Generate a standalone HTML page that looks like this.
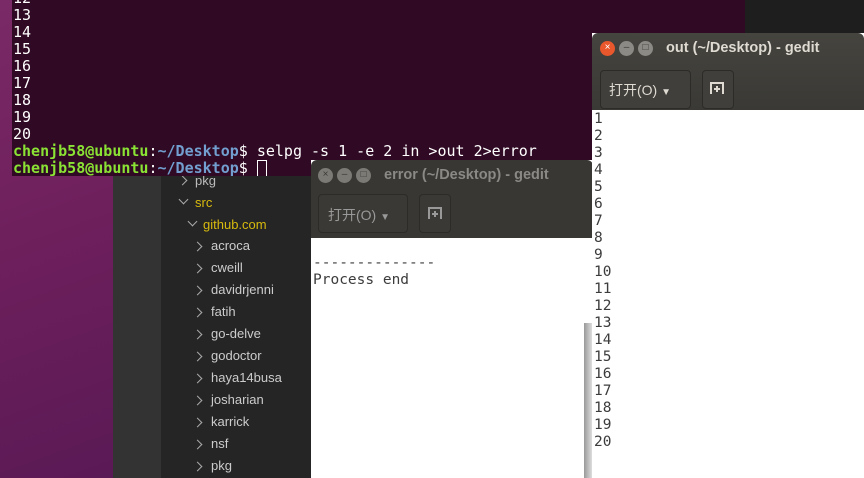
<!DOCTYPE html>
<html><head><meta charset="utf-8"><style>
*{margin:0;padding:0;box-sizing:border-box}
body{width:864px;height:478px;overflow:hidden;position:relative;background:#252526;font-family:"Liberation Sans","Noto Sans CJK SC",sans-serif}
.abs{position:absolute}
.term{left:12px;top:0;width:733px;height:176px;background:#300a24;font-family:"DejaVu Sans Mono","Liberation Mono",monospace;font-size:15px;color:#fff;line-height:17px;white-space:pre;overflow:hidden}
.g{color:#8ae234;font-weight:bold}.b{color:#729fcf;font-weight:bold}
.tree{font-size:13px;color:#ccc}
.tree div{position:absolute;height:22px;line-height:22px}
.chev{position:absolute;width:7px;height:7px;border-right:1px solid #aaa;border-bottom:1px solid #aaa}
.tb{color:#dfdbd2;font-weight:bold;font-size:14px}
.btn{position:absolute;border:1px solid #2c2b28;border-radius:4px;background:#403f3b}
.circ{position:absolute;width:15px;height:15px;border-radius:50%;background:#7b7a75;font-size:10px;color:#3c3b37;text-align:center;line-height:14px}
.mono{font-family:"DejaVu Sans Mono","Liberation Mono",monospace;font-size:14.5px;line-height:17px;color:#3c3c3c;white-space:pre}
</style></head><body>
<div class="abs" style="left:0;top:0;width:113px;height:478px;background:linear-gradient(160deg,#7a2a66,#6d1f5c 50%,#5a1a55)"></div>
<div class="abs" style="left:113px;top:176px;width:48px;height:302px;background:#333"></div>
<div class="abs" style="left:745px;top:0;width:119px;height:40px;background:#1e1e1e"></div>
<div class="abs tree" style="left:0;top:0;width:311px;height:478px">
<div style="left:195px;top:170px;color:#bbb">pkg</div><span class="chev" style="left:179px;top:177px;transform:rotate(-45deg)"></span>
<div style="left:195px;top:192px;color:#d7ba0d">src</div><span class="chev" style="left:180px;top:196px;transform:rotate(45deg)"></span>
<div style="left:203px;top:214px;color:#d7ba0d">github.com</div><span class="chev" style="left:189px;top:218px;transform:rotate(45deg)"></span>
<div style="left:211px;top:235px">acroca</div><span class="chev" style="left:194px;top:243px;transform:rotate(-45deg)"></span>
<div style="left:211px;top:257px">cweill</div><span class="chev" style="left:194px;top:265px;transform:rotate(-45deg)"></span>
<div style="left:211px;top:279px">davidrjenni</div><span class="chev" style="left:194px;top:287px;transform:rotate(-45deg)"></span>
<div style="left:211px;top:301px">fatih</div><span class="chev" style="left:194px;top:309px;transform:rotate(-45deg)"></span>
<div style="left:211px;top:323px">go-delve</div><span class="chev" style="left:194px;top:331px;transform:rotate(-45deg)"></span>
<div style="left:211px;top:345px">godoctor</div><span class="chev" style="left:194px;top:353px;transform:rotate(-45deg)"></span>
<div style="left:211px;top:367px">haya14busa</div><span class="chev" style="left:194px;top:375px;transform:rotate(-45deg)"></span>
<div style="left:211px;top:389px">josharian</div><span class="chev" style="left:194px;top:397px;transform:rotate(-45deg)"></span>
<div style="left:211px;top:411px">karrick</div><span class="chev" style="left:194px;top:419px;transform:rotate(-45deg)"></span>
<div style="left:211px;top:433px">nsf</div><span class="chev" style="left:194px;top:441px;transform:rotate(-45deg)"></span>
<div style="left:211px;top:455px">pkg</div><span class="chev" style="left:194px;top:463px;transform:rotate(-45deg)"></span>
</div>
<div class="abs term"><div style="margin-top:-10px;padding-left:1px">12
13
14
15
16
17
18
19
20
<span class="g">chenjb58@ubuntu</span>:<span class="b">~/Desktop</span>$ selpg -s 1 -e 2 in &gt;out 2&gt;error
<span class="g">chenjb58@ubuntu</span>:<span class="b">~/Desktop</span>$ <span style="display:inline-block;width:10px;height:18px;border:1px solid #fff;vertical-align:top"></span></div></div>

<!-- error window -->
<div class="abs" style="left:311px;top:160px;width:282px;height:318px;background:#fff">
<div class="abs" style="left:0;top:0;width:282px;height:78px;background:#383733;border-radius:6px 6px 0 0"></div>
<div class="circ" style="left:7px;top:8px">×</div><div class="circ" style="left:26px;top:8px">–</div><div class="circ" style="left:45px;top:8px">□</div>
<div class="abs" style="left:73px;top:7px;color:#8a8985;font-weight:bold;font-size:14.5px">error (~/Desktop) - gedit</div>
<div class="btn" style="left:7px;top:34px;width:90px;height:39px;background:#3a3935"></div>
<div class="abs" style="left:17px;top:45px;color:#999;font-size:14px">打开(O) <span style="font-size:10px">▼</span></div>
<div class="btn" style="left:108px;top:34px;width:32px;height:39px;background:#3a3935"></div>
<svg class="abs" style="left:116px;top:45px" width="16" height="16" viewBox="0 0 16 16"><path d="M2 14V3h12v11" stroke="#999" stroke-width="2" fill="none"/><path d="M5 9h6M8 6v6" stroke="#999" stroke-width="2"/></svg>
<div class="abs mono" style="left:2px;top:95px">--------------
Process end</div>
</div>

<!-- out window -->
<div class="abs" style="left:592px;top:33px;width:272px;height:445px;background:#fff">
<div class="abs" style="left:-8px;top:290px;width:8px;height:155px;background:linear-gradient(90deg,#999,#ddd)"></div>
<div class="abs" style="left:0;top:0;width:272px;height:77px;background:linear-gradient(#45443f,#3a3935);border-radius:6px 6px 0 0"></div>
<div class="circ" style="left:8px;top:8px;background:#e9572d;color:#fff">×</div><div class="circ" style="left:27px;top:8px;background:#8b8a85">–</div><div class="circ" style="left:46px;top:8px;background:#8b8a85">□</div>
<div class="abs tb" style="left:74px;top:7px;font-size:14.5px">out (~/Desktop) - gedit</div>
<div class="btn" style="left:8px;top:37px;width:91px;height:39px"></div>
<div class="abs" style="left:17px;top:47px;color:#dfdbd2;font-size:14px">打开(O) <span style="font-size:10px">▼</span></div>
<div class="btn" style="left:110px;top:37px;width:32px;height:39px"></div>
<svg class="abs" style="left:117px;top:47px" width="16" height="16" viewBox="0 0 16 16"><path d="M2 14V3h12v11" stroke="#dfdbd2" stroke-width="2" fill="none"/><path d="M5 9h6M8 6v6" stroke="#dfdbd2" stroke-width="2"/></svg>
<div class="abs mono" style="left:2px;top:78px">1
2
3
4
5
6
7
8
9
10
11
12
13
14
15
16
17
18
19
20</div>
</div>
</body></html>
